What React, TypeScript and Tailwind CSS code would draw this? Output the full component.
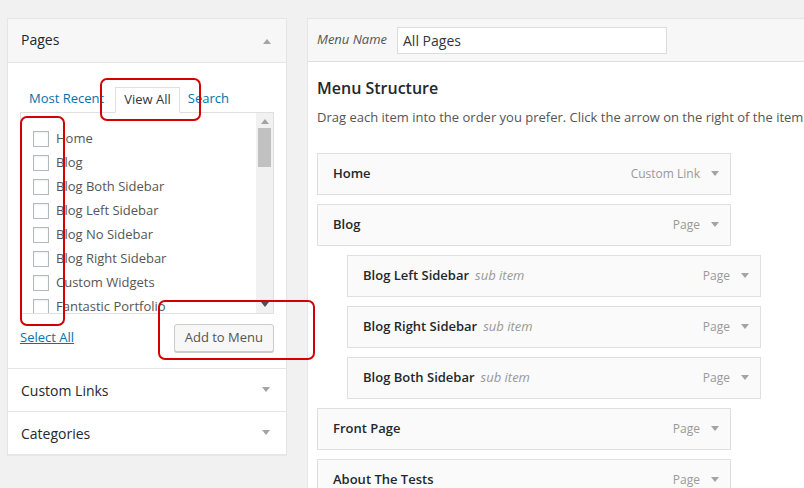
import React from 'react';

const PAGES = [
  'Home',
  'Blog',
  'Blog Both Sidebar',
  'Blog Left Sidebar',
  'Blog No Sidebar',
  'Blog Right Sidebar',
  'Custom Widgets',
  'Fantastic Portfolio',
];

const MENU_ITEMS = [
  { title: 'Home', type: 'Custom Link', sub: false },
  { title: 'Blog', type: 'Page', sub: false },
  { title: 'Blog Left Sidebar', type: 'Page', sub: true },
  { title: 'Blog Right Sidebar', type: 'Page', sub: true },
  { title: 'Blog Both Sidebar', type: 'Page', sub: true },
  { title: 'Front Page', type: 'Page', sub: false },
  { title: 'About The Tests', type: 'Page', sub: false },
];

function Caret({ up = false }: { up?: boolean }) {
  return (
    <svg width="10" height="6" viewBox="0 0 10 6" className="shrink-0">
      {up ? <path d="M1 6 L5 1 L9 6 Z" fill="#a0a5aa" /> : <path d="M1 0 L9 0 L5 5 Z" fill="#a0a5aa" />}
    </svg>
  );
}

function AccordionRow({ label }: { label: string }) {
  return (
    <div className="h-[43px] border-t border-[#e5e5e5] flex items-center justify-between pl-[13px] pr-[15px]">
      <span className="text-[14px] text-[#23282d]">{label}</span>
      <Caret />
    </div>
  );
}

function MenuItem({ title, type, sub }: { title: string; type: string; sub: boolean }) {
  return (
    <div
      className={`h-[42px] border border-[#dfdfdf] bg-[#fafafa] flex items-center pl-[15px] pr-[10px] ${
        sub ? 'ml-[30px]' : ''
      } w-[414px]`}
    >
      <span className="text-[13px] font-semibold text-[#23282d]">{title}</span>
      {sub && <span className="ml-[6px] text-[13px] italic text-[#999]">sub item</span>}
      <span className="ml-auto text-[12px] text-[#999]">{type}</span>
      <span className="ml-[10px]">
        <Caret />
      </span>
    </div>
  );
}

export default function App() {
  return (
    <div className="relative w-[804px] h-[488px] overflow-hidden bg-[#f1f1f1] font-['Open_Sans',sans-serif] flex items-start gap-[20px] pl-[7px] pt-[18px]">
      {/* left column */}
      <div className="w-[280px] shrink-0 bg-white border border-[#e5e5e5] shadow-[0_1px_1px_rgba(0,0,0,0.04)]">
        <div className="h-[43px] bg-[#f7f7f7] flex items-center justify-between pl-[13px] pr-[14px]">
          <span className="text-[14px] text-[#23282d] relative -top-[1px]">Pages</span>
          <Caret up />
        </div>
        <div className="border-t border-[#e5e5e5] px-[12px] pt-[24px] pb-[16px]">
          <div className="flex items-end pl-[9px] text-[13px] h-[25px]">
            <span className="text-[#0073aa] pb-[4px] mr-[11px]">Most Recent</span>
            <span className="h-[26px] px-[8px] border border-[#dfdfdf] border-b-white bg-white text-[#32373c] flex items-center relative top-[1px]">
              View All
            </span>
            <span className="text-[#0073aa] pb-[4px] ml-[8px]">Search</span>
          </div>
          <div className="h-[202px] border border-[#dfdfdf] flex">
            <div className="flex-1 pt-[14px] pl-[12px] overflow-hidden">
              {PAGES.map((p) => (
                <div key={p} className="h-[24px] flex items-center">
                  <span className="w-[16px] h-[16px] border border-[#b4b9be] bg-white shadow-[inset_0_1px_2px_rgba(0,0,0,0.07)]" />
                  <span className="ml-[7px] text-[13px] text-[#555]">{p}</span>
                </div>
              ))}
            </div>
            <div className="w-[17px] bg-[#f1f1f1] flex flex-col items-center">
              <svg width="8" height="5" viewBox="0 0 8 5" className="mt-[6px]">
                <path d="M0 5 L4 0 L8 5 Z" fill="#a3a3a3" />
              </svg>
              <div className="w-[13px] h-[39px] bg-[#c1c1c1] mt-[4px]" />
              <div className="flex-1" />
              <svg width="8" height="5" viewBox="0 0 8 5" className="mb-[6px]">
                <path d="M0 0 L8 0 L4 5 Z" fill="#505050" />
              </svg>
            </div>
          </div>
          <div className="flex items-center justify-between mt-[10px]">
            <span className="text-[13px] text-[#0073aa] underline">Select All</span>
            <span className="h-[28px] px-[10px] border border-[#ccc] rounded-[3px] bg-[#f7f7f7] shadow-[0_1px_0_#ccc] text-[13px] text-[#555] flex items-center">
              Add to Menu
            </span>
          </div>
        </div>
        <AccordionRow label="Custom Links" />
        <AccordionRow label="Categories" />
      </div>

      {/* right column */}
      <div className="flex-1 min-w-[520px] h-[480px] bg-white border border-[#e5e5e5]">
        <div className="h-[43px] bg-[#f7f7f7] border-b border-[#dfdfdf] flex items-center pl-[9px]">
          <span className="text-[13px] italic text-[#555]">Menu Name</span>
          <span className="ml-[10px] w-[270px] h-[27px] border border-[#ddd] bg-white flex items-center pl-[5px] text-[14px] text-[#32373c]">
            All Pages
          </span>
        </div>
        <div className="pl-[9px] pt-[14px]">
          <h2 className="text-[16px] font-semibold text-[#23282d] leading-[24px]">Menu Structure</h2>
          <p className="mt-[8px] text-[13px] text-[#555] whitespace-nowrap leading-[18px]">
            Drag each item into the order you prefer. Click the arrow on the right of the item to reveal additional configuration options.
          </p>
          <div className="mt-[27px] flex flex-col gap-[9px]">
            {MENU_ITEMS.map((m) => (
              <MenuItem key={m.title} {...m} />
            ))}
          </div>
        </div>
      </div>

      {/* red annotations */}
      <div className="absolute left-[100px] top-[78px] w-[101px] h-[43px] border-2 border-[#d40000] rounded-[7px]" />
      <div className="absolute left-[20px] top-[116px] w-[45px] h-[210px] border-2 border-[#d40000] rounded-[7px]" />
      <div className="absolute left-[158px] top-[300px] w-[157px] h-[60px] border-2 border-[#d40000] rounded-[7px]" />
    </div>
  );
}
